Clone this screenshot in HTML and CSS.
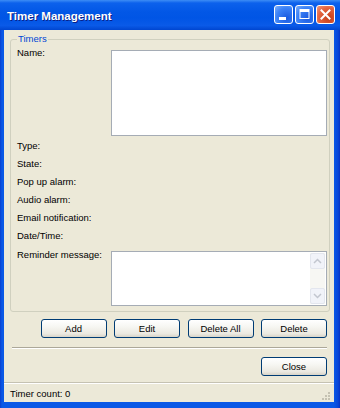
FILE: index.html
```html
<!DOCTYPE html>
<html lang="en">
<head>
    <meta charset="UTF-8">
    <title>Timer Management</title>

    <link rel="stylesheet" href="styles.css">
</head>
<body>
<div class="window">
    <div class="titlebar">
        <span class="title">Timer Management</span>
        <div class="caption-buttons">
            <span class="cap-btn">
                <svg width="17" height="17" viewBox="0 0 17 17"><rect x="4" y="11" width="7" height="3" fill="#fff"/></svg>
            </span>
            <span class="cap-btn">
                <svg width="17" height="17" viewBox="0 0 17 17"><rect x="4" y="3.5" width="9" height="9" fill="none" stroke="#fff" stroke-width="1"/><rect x="4" y="3" width="9" height="3" fill="#fff"/></svg>
            </span>
            <span class="cap-btn cap-close">
                <svg width="17" height="17" viewBox="0 0 17 17"><path d="M4.5 4.5 L12.5 12.5 M12.5 4.5 L4.5 12.5" stroke="#fff" stroke-width="2" stroke-linecap="square"/></svg>
            </span>
        </div>
    </div>

    <div class="client">
        <div class="content">
            <fieldset class="group">
                <legend>Timers</legend>

                <div class="row row-name">
                    <label>Name:</label>
                    <div class="textbox name-box"></div>
                </div>

                <div class="row"><label>Type:</label></div>
                <div class="row"><label>State:</label></div>
                <div class="row"><label>Pop up alarm:</label></div>
                <div class="row"><label>Audio alarm:</label></div>
                <div class="row"><label>Email notification:</label></div>
                <div class="row"><label>Date/Time:</label></div>

                <div class="row row-memo">
                    <label>Reminder message:</label>
                    <div class="textbox memo">
                        <div class="scrollbar">
                            <span class="sb-btn">
                                <svg width="9" height="6" viewBox="0 0 9 6"><path d="M1 5 L4.5 1.5 L8 5" fill="none" stroke="#c2c6cf" stroke-width="1.5"/></svg>
                            </span>
                            <span class="sb-track"></span>
                            <span class="sb-btn">
                                <svg width="9" height="6" viewBox="0 0 9 6"><path d="M1 1 L4.5 4.5 L8 1" fill="none" stroke="#c2c6cf" stroke-width="1.5"/></svg>
                            </span>
                        </div>
                    </div>
                </div>
            </fieldset>

            <div class="actions">
                <button type="button">Add</button>
                <button type="button">Edit</button>
                <button type="button">Delete All</button>
                <button type="button">Delete</button>
            </div>

            <div class="separator"></div>

            <div class="footer">
                <button type="button">Close</button>
            </div>
        </div>

        <div class="statusbar">
            <span>Timer count: 0</span>
            <svg class="grip" width="11" height="11" viewBox="0 0 11 11">
                <g fill="#c5c2b2">
                    <rect x="8" y="2" width="2" height="2"/>
                    <rect x="5" y="5" width="2" height="2"/>
                    <rect x="8" y="5" width="2" height="2"/>
                    <rect x="2" y="8" width="2" height="2"/>
                    <rect x="5" y="8" width="2" height="2"/>
                    <rect x="8" y="8" width="2" height="2"/>
                </g>
            </svg>
        </div>
    </div>
</div>
</body>
</html>
```

FILE: styles.css
```css
* {
    box-sizing: border-box;
}

body {
    margin: 0;
    font-family: "Liberation Sans", Arial, sans-serif;
    font-size: 9.5px;
    color: #000;
}

.window {
    width: 340px;
    height: 408px;
    display: flex;
    flex-direction: column;
    background: linear-gradient(to right, #0a3fcf 0, #0a58e6 2px, #0a58e6 334px, #0846d8 338px, #0733c2 340px);
}

.titlebar {
    height: 30px;
    display: flex;
    align-items: center;
    justify-content: space-between;
    padding-left: 7px;
    background: linear-gradient(to bottom, #3d8df5 0, #0c61ec 3px, #0257e6 12px, #0055e5 60%, #0a5ae8 85%, #0046d0 100%);
}

.title {
    color: #fff;
    font-weight: bold;
    font-size: 11.5px;
    text-shadow: 1px 1px 0 #0a1f87;
    margin-top: 1px;
}

.caption-buttons {
    display: flex;
    gap: 2px;
    margin-right: 5px;
    margin-top: -1px;
}

.cap-btn {
    width: 19px;
    height: 19px;
    display: flex;
    align-items: center;
    justify-content: center;
    border: 1px solid #fff;
    border-radius: 3px;
    background: radial-gradient(circle at 70% 70%, #1a5ae0 0, #3b82f7 60%, #7eb0fb 100%);
}

.cap-close {
    background: radial-gradient(circle at 70% 70%, #c33d18 0, #e4643f 60%, #f09a7e 100%);
}

.client {
    flex: 1;
    margin: 0 6px 6px 4px;
    background: #ece9d8;
    display: flex;
    flex-direction: column;
}

.content {
    padding: 0 4px 0 6px;
}

.group {
    margin: 3px 0 0;
    padding: 2px 2px 5px 6px;
    border: 1px solid #d0d0bf;
    border-radius: 3px;
    min-width: 0;
}

.group legend {
    padding: 0 1px;
    line-height: 12px;
    color: #0046d5;
}

.row {
    display: flex;
    height: 18px;
    line-height: 18px;
}

.row label {
    width: 94px;
    flex-shrink: 0;
}

.row-name {
    height: 89px;
    line-height: 12px;
    margin-bottom: 1px;
}

.textbox {
    width: 216px;
    background: #fff;
    border: 1px solid #a5acb5;
}

.name-box {
    margin-top: 3px;
    height: 86px;
}

.row-memo {
    height: 61px;
}

.row-memo label {
    padding-top: 1px;
}

.memo {
    margin-top: 6px;
    height: 55px;
    display: flex;
    justify-content: flex-end;
    padding: 1px;
}

.scrollbar {
    width: 15px;
    display: flex;
    flex-direction: column;
    background: #f7f7f3;
}

.sb-btn {
    height: 16px;
    display: flex;
    align-items: center;
    justify-content: center;
    background: #f1f3f9;
    border: 1px solid #e3e6ee;
    border-radius: 2px;
}

.sb-track {
    flex: 1;
}

.actions,
.footer {
    display: flex;
    justify-content: flex-end;
    gap: 7.5px;
    margin-right: 3px;
}

.actions {
    margin-top: 7px;
}

button {
    width: 66px;
    height: 19px;
    padding: 0;
    font-family: "Liberation Sans", Arial, sans-serif;
    font-size: 9.5px;
    color: #000;
    border: 1px solid #003c74;
    border-radius: 3px;
    background: linear-gradient(to bottom, #ffffff 0, #f6f6f2 40%, #ebe9e1 80%, #d8d4c8 100%);
}

.separator {
    margin: 9px 3px 0 2px;
    height: 2px;
    border-top: 1px solid #aca899;
    border-bottom: 1px solid #fff;
}

.footer {
    margin-top: 8px;
}

.statusbar {
    margin-top: auto;
    height: 20px;
    display: flex;
    align-items: center;
    justify-content: space-between;
    padding: 1px 3px 0 6px;
    border-top: 1px solid #c5c2b2;
    box-shadow: inset 0 1px 0 #fff;
}

.grip {
    align-self: flex-end;
    margin-bottom: 1px;
}
```
